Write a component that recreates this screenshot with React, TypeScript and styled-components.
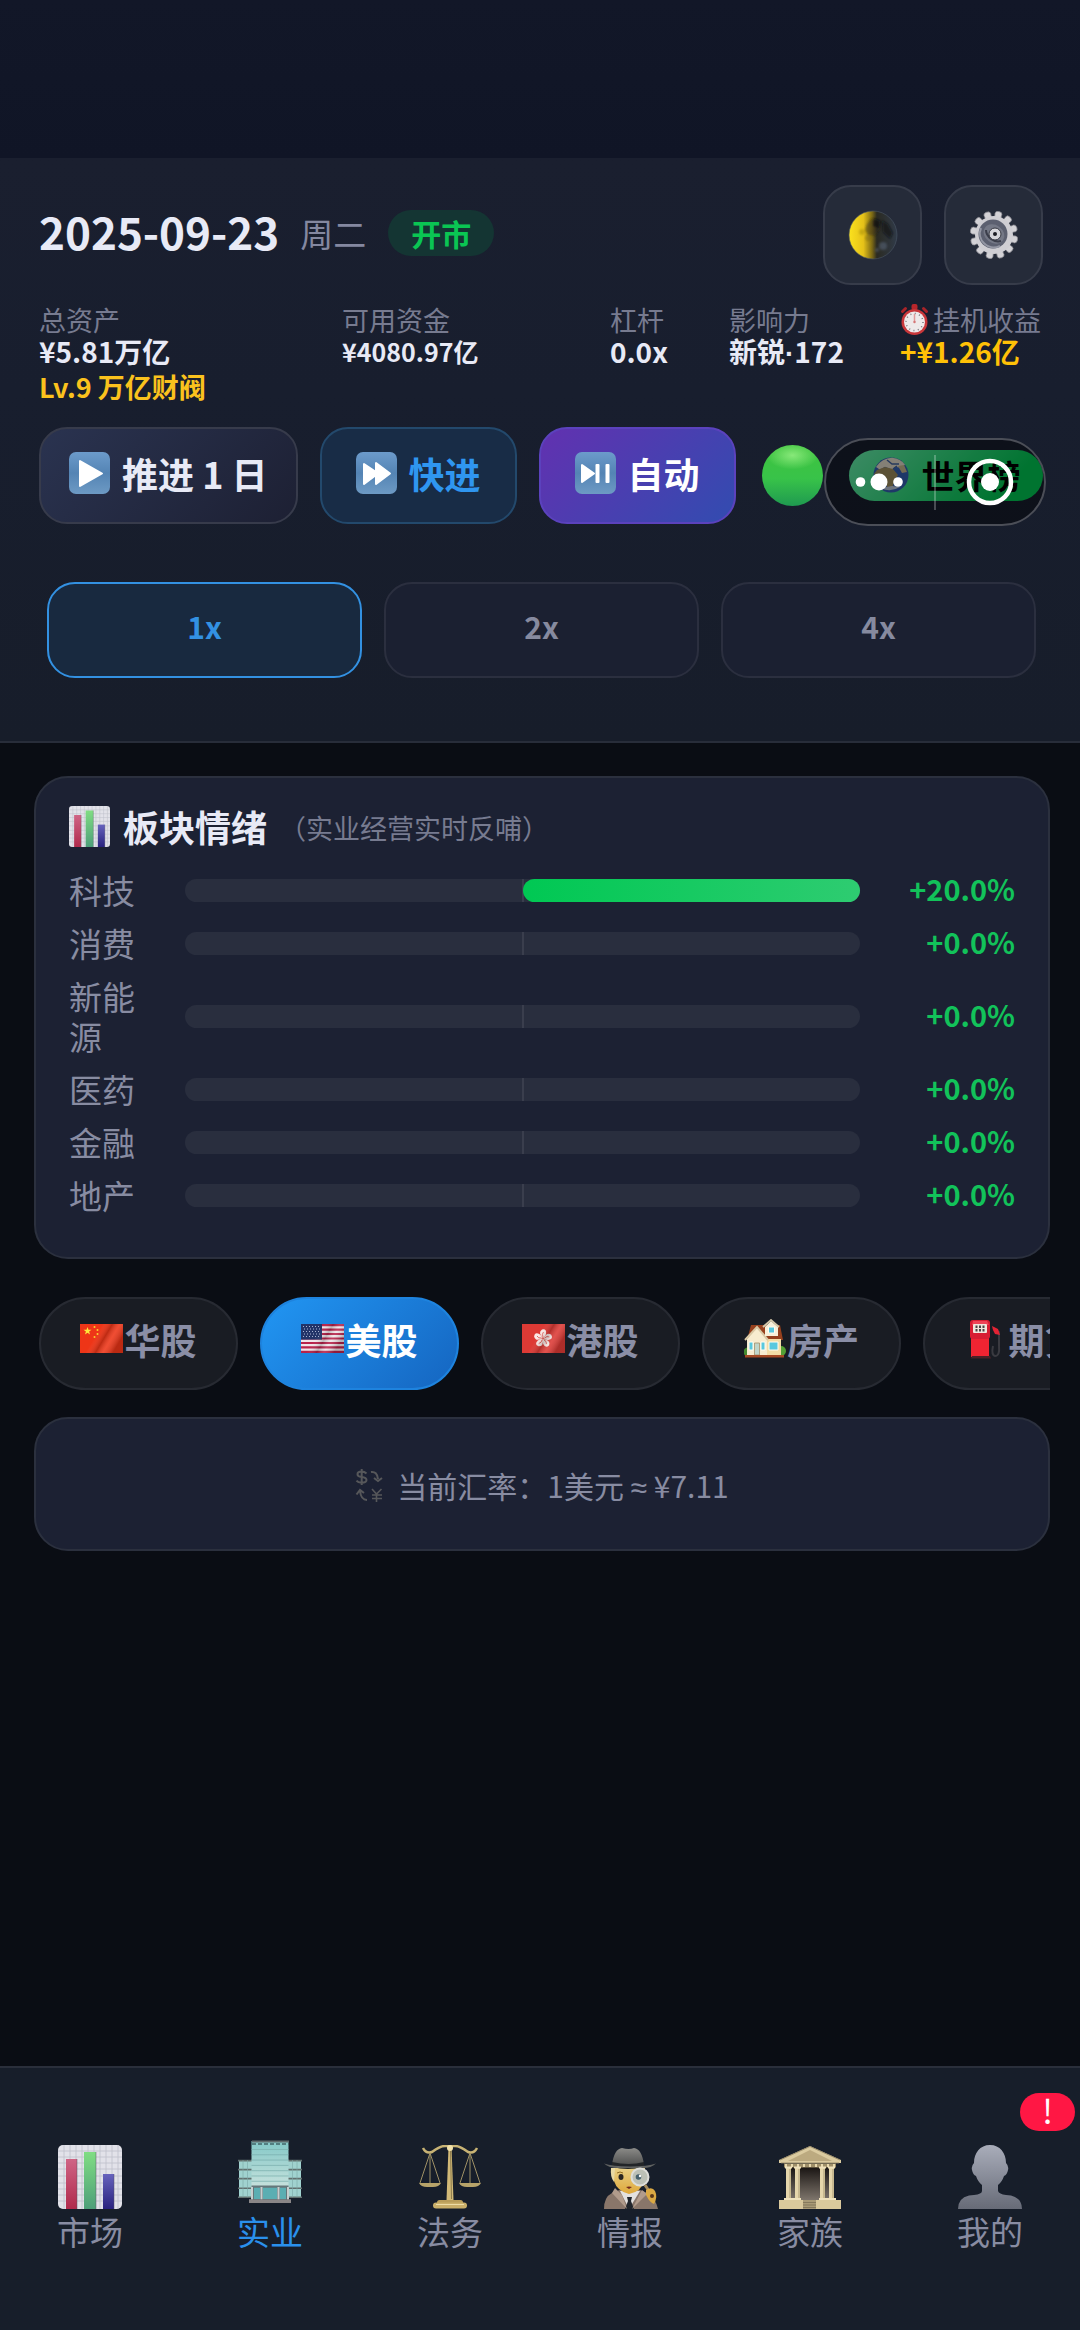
import { useState } from "react";
import styled, { createGlobalStyle } from "styled-components";

const GlobalStyle = createGlobalStyle`
  * {
    box-sizing: border-box;
  }
  body {
    margin: 0;
    background: #0a0d14;
    color: #e8eaf6;
    font-family: "Noto Sans CJK SC", "Noto Sans", sans-serif;
  }
  button {
    font-family: inherit;
    cursor: pointer;
  }
  svg {
    display: block;
    flex-shrink: 0;
  }
`;

const Wrapper = styled.div`
  min-height: 100vh;
  display: flex;
  flex-direction: column;
`;

const StatusArea = styled.div`
  height: 158px;
  background: linear-gradient(#121728, #101526);
`;

const Header = styled.header`
  padding: 27px 37px 63px 39px;
  background: linear-gradient(#1a1f2f, #181e2e 40%, #171d2a);
  border-bottom: 2px solid #282d3a;
`;

const TopRow = styled.div`
  display: flex;
  align-items: center;
  justify-content: space-between;
`;

const DateBox = styled.div`
  display: flex;
  align-items: center;
  padding-bottom: 4px;
`;

const DateText = styled.h1`
  margin: 0 21px 0 0;
  padding-bottom: 5px;
  font-size: 44px;
  line-height: 60px;
  font-weight: 700;
`;

const Weekday = styled.span`
  margin-right: 22px;
  font-size: 33px;
  line-height: 40px;
  color: #8488a0;
`;

const OpenTag = styled.span`
  padding: 0 23px;
  border-radius: 23px;
  background: #143533;
  color: #0ac653;
  font-size: 30px;
  line-height: 46px;
  font-weight: 700;
`;

const IconRow = styled.div`
  display: flex;
  gap: 22px;
`;

const IconButton = styled.button`
  width: 99px;
  height: 100px;
  padding: 0;
  display: flex;
  align-items: center;
  justify-content: center;
  border: 2px solid #373c4a;
  border-radius: 28px;
  background: #252b39;
`;

const Stats = styled.dl`
  margin: 18px 0 22px;
  display: grid;
  grid-template-columns: 303fr 268fr 119fr 171fr 143fr;
`;

const Stat = styled.div`
  white-space: nowrap;
`;

const StatLabel = styled.dt`
  display: flex;
  align-items: center;
  gap: 4px;
  font-size: 27px;
  line-height: 33px;
  color: #777b90;
`;

const StatValue = styled.dd<{ gold?: boolean; small?: boolean }>`
  margin: 0;
  font-size: ${(props) => (props.small ? 25 : 28)}px;
  line-height: 30px;
  font-weight: 700;
  color: ${(props) => (props.gold ? "#ffc107" : "#e8eaf6")};
`;

/* some signs are a full em wide in the CJK font */
const Narrow = styled.span`
  font-family: "Liberation Sans", sans-serif;
`;

const Level = styled.dd`
  margin: 3px 0 0;
  font-size: 27px;
  line-height: 36px;
  font-weight: 700;
  color: #fbc21d;
`;

const Actions = styled.div`
  position: relative;
  display: flex;
  align-items: center;
  white-space: nowrap;
`;

const ActionButton = styled.button<{ kind: "plain" | "blue" | "purple" }>`
  height: 97px;
  min-width: 197px;
  margin-right: 22px;
  padding: 0 28px 6px;
  display: flex;
  align-items: center;
  justify-content: center;
  gap: 12px;
  border-radius: 28px;
  font-size: 36px;
  font-weight: 700;
  ${(props) =>
    props.kind === "plain" &&
    `background: linear-gradient(135deg, #2a3350, #1d2033);
     border: 2px solid #373b4b;
     color: #e8eaf6;`}
  ${(props) =>
    props.kind === "blue" &&
    `background: #182c46;
     border: 2px solid #23496c;
     color: #2f96f0;`}
  ${(props) =>
    props.kind === "purple" &&
    `background: linear-gradient(135deg, #6231b0, #324cb0);
     border: 2px solid #5b42bd;
     color: #fff;`}
`;

const Ball = styled.span`
  width: 61px;
  height: 61px;
  margin: 0 26px 0 4px;
  border-radius: 50%;
  background: radial-gradient(
      ellipse 26px 14px at 50% 17%,
      rgba(160, 245, 140, 0.75),
      transparent
    ),
    linear-gradient(#3fc33e, #38c349 55%, #1f9a50);
`;

const WorldButton = styled.button`
  height: 51px;
  padding: 0 22px 2px 24px;
  display: flex;
  align-items: center;
  gap: 13px;
  border: 0;
  border-radius: 26px;
  background: linear-gradient(135deg, #69f0ae, #00c853 80%);
  color: #000;
  font-size: 33px;
  line-height: 48px;
  font-weight: 700;
`;

/* host app capsule floats over the page */
const Capsule = styled.div`
  position: absolute;
  right: -3px;
  top: 11px;
  width: 222px;
  height: 88px;
  display: flex;
  align-items: center;
  border: 2px solid #4b4e57;
  border-radius: 44px;
  background: rgba(0, 0, 0, 0.42);
`;

const CapsuleButton = styled.button`
  flex: 1;
  height: 100%;
  padding: 0;
  display: flex;
  align-items: center;
  justify-content: center;
  border: 0;
  background: none;
`;

const CapsuleLine = styled.span`
  width: 2px;
  height: 55px;
  background: rgba(255, 255, 255, 0.25);
`;

const Speeds = styled.div`
  margin: 58px 7px 0 8px;
  display: flex;
  gap: 22px;
`;

const SpeedButton = styled.button<{ active: boolean }>`
  flex: 1;
  height: 96px;
  padding: 0 0 8px;
  border-radius: 28px;
  border: 2px solid ${(props) => (props.active ? "#3391e2" : "#2b2f3f")};
  background: ${(props) => (props.active ? "#18293f" : "#1b2031")};
  color: ${(props) => (props.active ? "#3391e2" : "#868a9f")};
  font-size: 30px;
  font-weight: 700;
`;

const Main = styled.main`
  flex: 1;
  padding: 33px 30px 33px 34px;
`;

const Card = styled.section`
  border: 2px solid #2b303e;
  border-radius: 34px;
  background: #1c2133;
`;

const Sectors = styled(Card)`
  padding: 24px 33px 29px;
`;

const CardTitle = styled.h2`
  margin: 0 0 20px;
  display: flex;
  align-items: center;
  font-size: 36px;
  line-height: 48px;
  font-weight: 700;
`;

const TitleText = styled.span`
  margin: 0 12px 0 13px;
`;

const TitleNote = styled.small`
  padding-top: 4px;
  font-size: 27px;
  line-height: 40px;
  font-weight: 400;
  color: #777b90;
`;

const SectorRow = styled.div`
  display: flex;
  align-items: center;
  gap: 33px;
  margin-bottom: 13px;
`;

const SectorName = styled.span`
  width: 83px;
  font-size: 33px;
  line-height: 40px;
  color: #888ca2;
`;

const Track = styled.div`
  flex: 1;
  height: 23px;
  border-radius: 12px;
  background: linear-gradient(#3a3e4d, #3a3e4d) center / 2px 100% no-repeat
    #292e3e;
`;

const Fill = styled.div`
  height: 100%;
  margin-left: 50%;
  border-radius: 12px;
  background: linear-gradient(90deg, #00c853, #2ecc71);
`;

const Percent = styled.span`
  width: 122px;
  font-size: 29px;
  line-height: 36px;
  padding-bottom: 4px;
  font-weight: 700;
  text-align: right;
  color: #12c25a;
`;

const Tabs = styled.div`
  margin: 38px 0 27px;
  padding-left: 5px;
  display: flex;
  gap: 22px;
  overflow: hidden;
`;

const Tab = styled.button<{ active: boolean }>`
  flex: none;
  width: 199px;
  height: 93px;
  padding: 0 0 10px;
  display: flex;
  align-items: center;
  justify-content: center;
  gap: 1px;
  border-radius: 47px;
  border: 2px solid ${(props) => (props.active ? "#1e83de" : "#272a32")};
  background: ${(props) =>
    props.active ? "linear-gradient(135deg, #2196f3, #1565c0)" : "#191c23"};
  color: ${(props) => (props.active ? "#fff" : "#8a8ea6")};
  font-size: 36px;
  font-weight: 700;
  white-space: nowrap;
`;

const Rate = styled(Card)`
  height: 134px;
  padding-top: 4px;
  display: flex;
  align-items: center;
  justify-content: center;
  gap: 14px;
  font-size: 30px;
  line-height: 40px;
  color: #888ca2;

  p {
    margin: 0;
  }
`;

const Nav = styled.nav`
  position: sticky;
  bottom: 0;
  height: 264px;
  padding-top: 77px;
  display: flex;
  align-items: flex-start;
  border-top: 2px solid #2a2f3b;
  background: #171e2a;
`;

const NavItem = styled.a<{ active: boolean }>`
  position: relative;
  flex: 1;
  display: flex;
  flex-direction: column;
  align-items: center;
  text-decoration: none;
  font-size: 33px;
  line-height: 44px;
  color: ${(props) => (props.active ? "#2a90ec" : "#888ca2")};
`;

const Badge = styled.span`
  position: absolute;
  top: -52px;
  right: 5px;
  width: 55px;
  height: 38px;
  border-radius: 19px;
  background: #ff1744;
  color: #fff;
  font-size: 33px;
  line-height: 34px;
  text-align: center;
`;

const MoonIcon = () => (
  <svg width="50" height="50" viewBox="0 0 50 50">
    <defs>
      <linearGradient id="moon">
        <stop offset="0" stopColor="#fbe21d" />
        <stop offset="0.3" stopColor="#e6c219" />
        <stop offset="0.48" stopColor="#7d6a14" />
        <stop offset="0.58" stopColor="#2a2a22" />
        <stop offset="1" stopColor="#303a48" />
      </linearGradient>
      <filter id="soft">
        <feGaussianBlur stdDeviation="1.2" />
      </filter>
    </defs>
    <circle cx="25" cy="25" r="24" fill="url(#moon)" stroke="#4a5564" strokeWidth="0.6" />
    <g filter="url(#soft)">
      <path d="M19 14l5-6 6 3 2 8-5 7-7-1-3-5z" fill="#2a260f" opacity="0.45" />
      <path d="M34 10l6 4 5 9-3 6-7-7zM26 8l7 3-2 7-6-2z" fill="#0b0e12" opacity="0.65" />
      <circle cx="35" cy="36" r="4" fill="#5c6c84" opacity="0.5" />
      <circle cx="29" cy="40" r="2" fill="#5f6c7e" opacity="0.5" />
      <circle cx="14" cy="22" r="3" fill="#8a740f" opacity="0.35" />
      <circle cx="20" cy="28" r="3" fill="#6e5c10" opacity="0.35" />
    </g>
  </svg>
);

const GearIcon = () => (
  <svg width="50" height="50" viewBox="0 0 50 50">
    {Array.from({ length: 12 }, (_, i) => (
      <g key={i} transform={`rotate(${i * 30 + 12} 25 25)`}>
        <path
          d="M22 8L21.500 3.500Q21.500 1 25 1T28.500 3.500L28 8z"
          fill="#d3d2d6"
          stroke="#85858d"
          strokeWidth="0.7"
        />
      </g>
    ))}
    <circle cx="25" cy="25" r="19" fill="#cfced3" />
    <circle cx="24" cy="24" r="14.500" fill="#5c6070" />
    <path d="M12 18a14 14 0 0 0 19 18" fill="none" stroke="#9497a4" strokeWidth="2" />
    <ellipse cx="25" cy="24" rx="11" ry="9" transform="rotate(35 25 24)" fill="#747886" />
    <path d="M17 20a11 9 35 0 0 15 11" fill="none" stroke="#3b3e4b" strokeWidth="2" />
    <circle cx="26" cy="24" r="6" fill="#d6d6da" stroke="#383a44" strokeWidth="1" />
    <circle cx="26" cy="24" r="2" fill="#1b1c22" />
  </svg>
);

const StopwatchIcon = () => (
  <svg width="29" height="32" viewBox="0 0 29 32">
    <rect x="11.500" y="0" width="6" height="6" rx="2" fill="#b9262b" />
    <path d="M2.500 7.500l3-3M26.500 7.500l-3-3" stroke="#a92328" strokeWidth="3" strokeLinecap="round" />
    <circle cx="14.500" cy="18" r="13" fill="#c8373a" />
    <circle cx="14.500" cy="18" r="10.500" fill="#eeeaea" />
    <circle
      cx="14.500"
      cy="18"
      r="8.500"
      fill="none"
      stroke="#77777c"
      strokeWidth="1.500"
      strokeDasharray="1 3.450"
    />
    <path d="M14.500 18.500V10" stroke="#e09a9a" strokeWidth="1.500" />
    <circle cx="14.500" cy="18" r="1.200" fill="#d57777" />
  </svg>
);

const KeyIcon = ({ type }: { type: "play" | "forward" | "auto" }) => (
  <svg width="41" height="42" viewBox="0 0 41 42">
    <defs>
      <linearGradient id="key" x1="0" y1="0" x2="0" y2="1">
        <stop offset="0" stopColor="#6c9bcb" />
        <stop offset="0.5" stopColor="#5484b4" />
        <stop offset="1" stopColor="#6d9ac4" />
      </linearGradient>
    </defs>
    <rect width="41" height="42" rx="7" fill="url(#key)" />
    <g fill="#fff" stroke="#fff" strokeWidth="2" strokeLinejoin="round">
      {type === "play" && <path d="M11 9v25l22-12.500z" />}
      {type === "forward" && <path d="M8 12v20l12-9v9l14-10.500L20 11v9z" />}
      {type === "auto" && <path d="M7 13v17l12-8.500zM21.500 13h2v17h-2zM31.500 13h2v17h-2z" />}
    </g>
  </svg>
);

const EarthIcon = () => (
  <svg width="36" height="36" viewBox="0 0 36 36">
    <circle cx="18" cy="18" r="17.500" fill="#3561b4" />
    <path d="M3 10Q9 1 19 .800q9 1 13 7l-4 3-6-1-3 3-7-3-5 3z" fill="#e4ddcc" />
    <path d="M4 13l8-3 8 2 5 6-3 5-3 8-5-1-2-8-8-2-3-3z" fill="#9f8d5e" />
    <path d="M25 9l6-1 3 7-5 1z" fill="#c9b98e" />
    <path d="M14 3l5 4 7 0M20 12l4-3" stroke="#41639f" strokeWidth="1.500" fill="none" />
    <path d="M8 31q9 5 19-1l-8-1z" fill="#bdc9da" />
  </svg>
);

const DotsIcon = () => (
  <svg width="50" height="20" viewBox="0 0 50 20" fill="#fff">
    <circle cx="5.500" cy="10" r="4.800" />
    <circle cx="24" cy="10" r="8.500" />
    <circle cx="43" cy="10" r="4.800" />
  </svg>
);

const TargetIcon = () => (
  <svg width="48" height="48" viewBox="0 0 48 48">
    <circle cx="24" cy="24" r="21" fill="none" stroke="#fff" strokeWidth="4.500" />
    <circle cx="24" cy="24" r="9" fill="#fff" />
  </svg>
);

const ChartIcon = ({ size }: { size: number }) => (
  <svg width={size} height={size} viewBox="0 0 64 64">
    <defs>
      <linearGradient id="red" x1="0" y1="0" x2="0" y2="1">
        <stop offset="0" stopColor="#cf6485" />
        <stop offset="1" stopColor="#b02a4c" />
      </linearGradient>
      <linearGradient id="green" x1="0" y1="0" x2="0" y2="1">
        <stop offset="0" stopColor="#80dd83" />
        <stop offset="1" stopColor="#4d9f79" />
      </linearGradient>
      <linearGradient id="blue" x1="0" y1="0" x2="0" y2="1">
        <stop offset="0" stopColor="#6763bd" />
        <stop offset="1" stopColor="#29227e" />
      </linearGradient>
    </defs>
    <rect width="64" height="64" rx="5" fill="#e2e2e9" />
    <path
      d="M6 0v64M12 0v64M18 0v64M24 0v64M30 0v64M36 0v64M42 0v64M48 0v64M54 0v64M60 0v64M0 6h64M0 12h64M0 18h64M0 24h64M0 31h64M0 38h64M0 44h64M0 50h64M0 56h64"
      stroke="#bfc0ca"
      strokeWidth="0.800"
    />
    <path d="M8 14h11v50H8z" fill="url(#red)" />
    <path d="M26 7h12v57H26z" fill="url(#green)" />
    <path d="M45 29h11v35H45z" fill="url(#blue)" />
    <path d="M19 14v50M38 7v57M56 29v35" stroke="#55505f" strokeWidth="0.800" opacity="0.6" />
  </svg>
);

const FlagShade = () => (
  <>
    <defs>
      <linearGradient id="shade" x1="0" y1="0" x2="1" y2="0.400">
        <stop offset="0.45" stopColor="#fff" stopOpacity="0" />
        <stop offset="0.65" stopColor="#000" stopOpacity="0.2" />
        <stop offset="0.8" stopColor="#fff" stopOpacity="0.12" />
        <stop offset="1" stopColor="#000" stopOpacity="0.22" />
      </linearGradient>
    </defs>
    <rect width="43" height="29" fill="url(#shade)" />
  </>
);

const ChinaFlag = () => (
  <svg width="43" height="29" viewBox="0 0 43 29">
    <rect width="43" height="29" fill="#ee3517" />
    <path
      d="M7.500 3l1 2.800h3L9.100 7.600l.9 2.900-2.500-1.800L5 10.500l.9-2.900L3.500 5.800h3z"
      fill="#ffe83b"
    />
    <g fill="#f9d02e">
      <circle cx="14.500" cy="3" r="1" />
      <circle cx="17.500" cy="6" r="1" />
      <circle cx="17.500" cy="10" r="1" />
      <circle cx="14.500" cy="13" r="1" />
    </g>
    <FlagShade />
  </svg>
);

const UsaFlag = () => (
  <svg width="43" height="29" viewBox="0 0 43 29">
    <rect width="43" height="29" fill="#f0e4e8" />
    <path
      d="M0 1.100h43M0 5.600h43M0 10h43M0 14.500h43M0 19h43M0 23.400h43M0 27.900h43"
      stroke="#b8224a"
      strokeWidth="2.230"
    />
    <rect width="21" height="15.600" fill="#233468" />
    <path
      d="M2 2.500h18M3 5h16M2 7.500h18M3 10h16M2 12.500h18"
      stroke="#a9b4d0"
      strokeWidth="1"
      strokeDasharray="1 2"
    />
    <FlagShade />
  </svg>
);

const HongKongFlag = () => (
  <svg width="43" height="29" viewBox="0 0 43 29">
    <rect width="43" height="29" fill="#dd3a35" />
    {[0, 72, 144, 216, 288].map((angle) => (
      <g key={angle} transform={`rotate(${angle} 21 14.500)`}>
        <path d="M21 14Q15.500 8.500 20 5.500q5-1 4 4.500Q23.500 12.500 21 14z" fill="#fbe9e6" />
        <path d="M21 13q-1.500-3 0.500-5" stroke="#dd3a35" strokeWidth="0.700" fill="none" />
      </g>
    ))}
    <FlagShade />
  </svg>
);

const HouseIcon = () => (
  <svg width="42" height="40" viewBox="0 0 42 40">
    <circle cx="4" cy="33" r="4.500" fill="#458a2e" />
    <circle cx="37" cy="32" r="5" fill="#54a035" />
    <path d="M7 6h29l3 15H3z" fill="#96401d" />
    <path d="M22 20h15v16H22z" fill="#f3dda6" />
    <path d="M3 20L13 8l10 12v16H3z" fill="#f7ecd0" />
    <path d="M1 21L13 8l11 13" fill="none" stroke="#d9c9a6" strokeWidth="2" />
    <path d="M21 8l6-6 7 6v9H21z" fill="#f9efd8" />
    <path d="M19 8l8-7 8 7" fill="none" stroke="#d5c7a9" strokeWidth="1.800" />
    <path
      d="M24.500 8h6v6h-6zM25 23h9v8h-9zM5 23h4v8H5zM17 23h4v8h-4z"
      fill="#58c8de"
      stroke="#fffdf0"
      strokeWidth="1"
    />
    <path d="M10.500 24h5v12h-5z" fill="#bfd5ca" stroke="#a4906b" strokeWidth="0.800" />
    <path d="M1 36h39v2.500H1z" fill="#a64a24" />
  </svg>
);

const PumpIcon = () => (
  <svg width="43" height="42" viewBox="0 0 43 42">
    <path d="M29 10l6 4v14q1 10-4 10-4-1-2-10" fill="none" stroke="#3a3a40" strokeWidth="2" />
    <path d="M28 8l6 3 2 6-5-1-2-4z" fill="#e32334" />
    <rect x="7" y="20" width="18" height="19" fill="#f02432" />
    <rect x="6" y="2" width="20" height="19" rx="3" fill="#d81c31" />
    <path d="M9 3h14l2 4H8z" fill="#ef4355" />
    <rect x="9" y="6" width="14" height="9" rx="1" fill="#f1e6dc" />
    <path d="M11.500 7.500h2v2.500h-2zM15 7.500h2v2.500h-2zM18.500 7.500h2v2.500h-2zM11.500 11h2v2.500h-2zM15 11h2v2.500h-2zM18.500 11h2v2.500h-2z" fill="#4a4545" />
    <path d="M8 38h18l1 2.500H7z" fill="#4c2127" />
  </svg>
);

const CurrencyIcon = () => (
  <svg width="28" height="34" viewBox="0 0 28 34" fill="none" stroke="#56575a" strokeWidth="2">
    <path d="M11.500 4.500Q9.500 2.500 6.500 2.500q-4 0-4 2.700 0 2.400 4 2.800 5 .500 5 3 0 2.700-5 2.700-3.500 0-5-2M6.700 0v16" />
    <path d="M16 3q6-1 7 7m-4-1l4 3 4-3M12 31q-6 0-7-9m-3.500 3.500L5 21l4 3" />
    <path d="M17 20l4.500 5 5-5M21.500 25v8M17 26h10M17 29.500h10" strokeWidth="1.600" />
  </svg>
);

const BuildingIcon = () => (
  <svg width="64" height="64" viewBox="0 0 64 64" overflow="visible">
    <defs>
      <linearGradient id="glass" x1="0" y1="0" x2="0" y2="1">
        <stop offset="0" stopColor="#83c8c7" />
        <stop offset="1" stopColor="#c5e1dc" />
      </linearGradient>
    </defs>
    <g transform="translate(0 -4) scale(1 1.06)">
      <path d="M1 18h13v35H1zM50 18h13v35H50z" fill="#a0d2cf" />
      <path d="M0 18.500h14M0 27h14M0 35.500h14M0 44.500h14M0 53h14M50 18.500h14M50 27h14M50 35.500h14M50 44.500h14M50 53h14" stroke="#62706f" strokeWidth="1.500" />
      <path d="M5 18v35M9.500 18v35M54.500 18v35M59 18v35" stroke="#7da9a8" strokeWidth="0.600" />
      <rect x="13.500" y="0" width="37" height="43" fill="url(#glass)" />
      <path d="M13.500 8h37M13.500 13h37M13.500 18h37M13.500 23h37M13.500 28h37M13.500 33h37M13.500 38h37" stroke="#79aead" strokeWidth="0.700" />
      <path d="M14 .500h37" stroke="#5f6b6c" strokeWidth="2" />
      <path d="M14 2.800h37" stroke="#426668" strokeWidth="1.500" strokeDasharray="4 2" />
      <path d="M13.500 42h37v13h-37z" fill="#65777a" />
      <path d="M16 44h6v11h-6zM25 44h14v11H25zM42 44h6v11h-6z" fill="#5baeb2" />
      <path d="M14 43.500v12M23.500 43.500v12M40.500 43.500v12M50 43.500v12" stroke="#c6cfcf" strokeWidth="2" />
      <path d="M11 55h42v3.500H11z" fill="#8a8687" />
    </g>
  </svg>
);

const ScalesIcon = () => (
  <svg width="64" height="64" viewBox="0 0 64 64" fill="none">
    <path
      d="M5 3q3 6 9 4Q22 1 27 1h10q5 0 13 6 6 2 9-4"
      stroke="#c8b374"
      strokeWidth="2.500"
    />
    <path d="M12 8L2 38M12 8v30M12 8l10 30M52 8L42 38M52 8v30M52 8l10 30" stroke="#9e9065" strokeWidth="1" />
    <path d="M1 38h22q-2 4-8 4H9q-6 0-8-4zM41 38h22q-2 4-8 4h-6q-6 0-8-4z" fill="#b8a469" />
    <path d="M30.500 2h3l2 53h-7z" fill="#d1b977" />
    <path d="M32.500 4l1 50" stroke="#8c7b4c" strokeWidth="1" />
    <circle cx="32" cy="3" r="3" fill="#f0e0a9" />
    <rect x="19" y="55" width="26" height="5" rx="2.500" fill="#b99d59" />
    <rect x="15" y="57.500" width="34" height="6" rx="3" fill="#caaf69" />
    <path d="M18 59.500h28" stroke="#eddda6" strokeWidth="1" />
  </svg>
);

const DetectiveIcon = () => (
  <svg width="64" height="64" viewBox="0 0 64 64">
    <defs>
      <linearGradient id="hat" x1="0" y1="0" x2="0" y2="1">
        <stop offset="0" stopColor="#8b8b88" />
        <stop offset="1" stopColor="#474848" />
      </linearGradient>
      <linearGradient id="face" x1="0" y1="0" x2="0" y2="1">
        <stop offset="0" stopColor="#e8cf86" />
        <stop offset="1" stopColor="#dfa83a" />
      </linearGradient>
    </defs>
    <path d="M6 64q0-12 8-16l10-4h16l9 4q8 4 11 16z" fill="#89766a" />
    <path d="M22 46l9 18 11-18z" fill="#e3e1df" />
    <path d="M29 52h5l-1 4 3 8h-9l3-8z" fill="#20252c" />
    <path d="M17 43l-3 5 15 16-5-14zM44 45l-10 19 15-15z" fill="#b19b8b" />
    <path d="M14 23h33l-1 13q-3 11-15 13-12-3-15-13z" fill="url(#face)" />
    <path d="M13 23h4l-1 14q-4-5-3-14z" fill="#e9d9a3" />
    <ellipse cx="23" cy="32" rx="2.500" ry="3" fill="#292521" />
    <path d="M19 28q3-2 6 0" stroke="#926d25" fill="none" />
    <path d="M28 42q3-1 6 0l-3 2z" fill="#74291c" />
    <path d="M14 20Q16 4 24 3q7 2 12 0 8 1 10 17-15 5-32 0z" fill="url(#hat)" />
    <path d="M14 17q17 4 32 0v5q-16 4-32 0z" fill="#222528" />
    <path d="M6 18.500q8 3 26 3t26-3q-5 4.500-13 4.500H20q-9 0-14-4.500z" fill="#606261" />
    <circle cx="42" cy="32" r="8.500" fill="#bcc0b6" stroke="#dededa" strokeWidth="2" />
    <circle cx="40.500" cy="32" r="2.800" fill="#47626e" />
    <circle cx="42" cy="31" r="1.200" fill="#fff" />
    <path d="M47 40l8 12" stroke="#a68c5d" strokeWidth="3" />
    <path d="M48 45q6-4 9 1 3 6-1 13-4-1-8-9z" fill="#dba943" />
    <circle cx="54" cy="51" r="2" fill="#5a3719" />
  </svg>
);

const TempleIcon = () => (
  <svg width="64" height="64" viewBox="0 0 64 64">
    <defs>
      <linearGradient id="hall" x1="0" y1="0" x2="0" y2="1">
        <stop offset="0" stopColor="#120e0d" />
        <stop offset="1" stopColor="#81786e" />
      </linearGradient>
    </defs>
    <path d="M9 20h46v36H9z" fill="url(#hall)" />
    <path d="M1 15L32 1l31 14v3H1z" fill="#dbcba0" />
    <path d="M10 16L32 5l22 11z" fill="#bcaa80" />
    <path d="M2 15L32 1.500 62 15M3 18h58" stroke="#8d7f60" strokeWidth="0.800" fill="none" />
    <path d="M6 18.500h52v4H6z" fill="#9f8f69" />
    <path d="M8 19v3M14 19v3M20 19v3M26 19v3M32 19v3M38 19v3M44 19v3M50 19v3M56 19v3" stroke="#e8d9ae" strokeWidth="2" />
    <path d="M8 23h5v31H8zM17 23h5v31h-5zM42 23h5v31h-5zM51 23h5v31h-5z" fill="#e5d6ab" />
    <path d="M12 24v30M21 24v30M46 24v30M55 24v30" stroke="#aa9b74" strokeWidth="1" />
    <path d="M7 22.500h7M16 22.500h7M41 22.500h7M50 22.500h7M6 54h17M41 54h17" stroke="#efe2bc" strokeWidth="1.800" />
    <path d="M1 55h62v9H1z" fill="#dac99c" />
    <path d="M25 55h13v9H25z" fill="#a99a76" />
    <path d="M25 57.500h13M25 60h13M25 62.500h13" stroke="#776b51" strokeWidth="0.700" />
  </svg>
);

const PersonIcon = () => (
  <svg width="64" height="64" viewBox="0 0 64 64">
    <defs>
      <linearGradient id="person" x1="0" y1="0" x2="0" y2="1">
        <stop offset="0" stopColor="#a9adba" />
        <stop offset="1" stopColor="#676b77" />
      </linearGradient>
    </defs>
    <path
      d="M32 0C42 0 48 8 48 18q3 3 2 7-1 5-4 6-2 6-6 9v6q1 3 8 4l5 .500q11 3 11 13.500H0Q0 53 11 50.500l5-.500q8-1 8-4v-6q-4-3-6-9-3-1-4-6-1-4 2-7C16 8 22 0 32 0z"
      fill="url(#person)"
    />
  </svg>
);

const sectors = [
  { name: "科技", value: 20 },
  { name: "消费", value: 0 },
  { name: "新能源", value: 0 },
  { name: "医药", value: 0 },
  { name: "金融", value: 0 },
  { name: "地产", value: 0 },
];

const markets = [
  { name: "华股", icon: <ChinaFlag /> },
  { name: "美股", icon: <UsaFlag /> },
  { name: "港股", icon: <HongKongFlag /> },
  { name: "房产", icon: <HouseIcon /> },
  { name: "期货", icon: <PumpIcon /> },
];

const navItems = [
  { name: "市场", icon: <ChartIcon size={64} /> },
  { name: "实业", icon: <BuildingIcon /> },
  { name: "法务", icon: <ScalesIcon /> },
  { name: "情报", icon: <DetectiveIcon /> },
  { name: "家族", icon: <TempleIcon /> },
  { name: "我的", icon: <PersonIcon />, badge: "!" },
];

export default function App() {
  const [speed, setSpeed] = useState(1);
  const [market, setMarket] = useState("美股");
  const [page, setPage] = useState("实业");

  return (
    <Wrapper>
      <GlobalStyle />
      <StatusArea />
      <Header>
        <TopRow>
          <DateBox>
            <DateText>2025-09-23</DateText>
            <Weekday>周二</Weekday>
            <OpenTag>开市</OpenTag>
          </DateBox>
          <IconRow>
            <IconButton aria-label="夜间模式">
              <MoonIcon />
            </IconButton>
            <IconButton aria-label="设置">
              <GearIcon />
            </IconButton>
          </IconRow>
        </TopRow>

        <Stats>
          <Stat>
            <StatLabel>总资产</StatLabel>
            <StatValue>¥5.81万亿</StatValue>
            <Level>Lv.9 万亿财阀</Level>
          </Stat>
          <Stat>
            <StatLabel>可用资金</StatLabel>
            <StatValue small>¥4080.97亿</StatValue>
          </Stat>
          <Stat>
            <StatLabel>杠杆</StatLabel>
            <StatValue>0.0x</StatValue>
          </Stat>
          <Stat>
            <StatLabel>影响力</StatLabel>
            <StatValue>
              新锐<Narrow>·</Narrow>172
            </StatValue>
          </Stat>
          <Stat>
            <StatLabel>
              <StopwatchIcon />
              挂机收益
            </StatLabel>
            <StatValue gold>+¥1.26亿</StatValue>
          </Stat>
        </Stats>

        <Actions>
          <ActionButton kind="plain">
            <KeyIcon type="play" />
            推进 1 日
          </ActionButton>
          <ActionButton kind="blue">
            <KeyIcon type="forward" />
            快进
          </ActionButton>
          <ActionButton kind="purple">
            <KeyIcon type="auto" />
            自动
          </ActionButton>
          <Ball />
          <WorldButton>
            <EarthIcon />
            世界榜
          </WorldButton>
          <Capsule>
            <CapsuleButton aria-label="更多">
              <DotsIcon />
            </CapsuleButton>
            <CapsuleLine />
            <CapsuleButton aria-label="关闭">
              <TargetIcon />
            </CapsuleButton>
          </Capsule>
        </Actions>

        <Speeds>
          {[1, 2, 4].map((n) => (
            <SpeedButton key={n} active={speed === n} onClick={() => setSpeed(n)}>
              {n}x
            </SpeedButton>
          ))}
        </Speeds>
      </Header>

      <Main>
        <Sectors>
          <CardTitle>
            <ChartIcon size={41} />
            <TitleText>板块情绪</TitleText>
            <TitleNote>（实业经营实时反哺）</TitleNote>
          </CardTitle>
          {sectors.map((sector) => (
            <SectorRow key={sector.name}>
              <SectorName>{sector.name}</SectorName>
              <Track>
                {sector.value > 0 && <Fill style={{ width: `${sector.value * 2.5}%` }} />}
              </Track>
              <Percent>+{sector.value.toFixed(1)}%</Percent>
            </SectorRow>
          ))}
        </Sectors>

        <Tabs>
          {markets.map((item) => (
            <Tab
              key={item.name}
              active={market === item.name}
              onClick={() => setMarket(item.name)}
            >
              {item.icon}
              {item.name}
            </Tab>
          ))}
        </Tabs>

        <Rate>
          <CurrencyIcon />
          <p>
            当前汇率：1美元 <Narrow>≈</Narrow> ¥7.11
          </p>
        </Rate>
      </Main>

      <Nav>
        {navItems.map((item) => (
          <NavItem
            key={item.name}
            href="#"
            active={page === item.name}
            onClick={() => setPage(item.name)}
          >
            {item.icon}
            {item.name}
            {item.badge && <Badge>{item.badge}</Badge>}
          </NavItem>
        ))}
      </Nav>
    </Wrapper>
  );
}
